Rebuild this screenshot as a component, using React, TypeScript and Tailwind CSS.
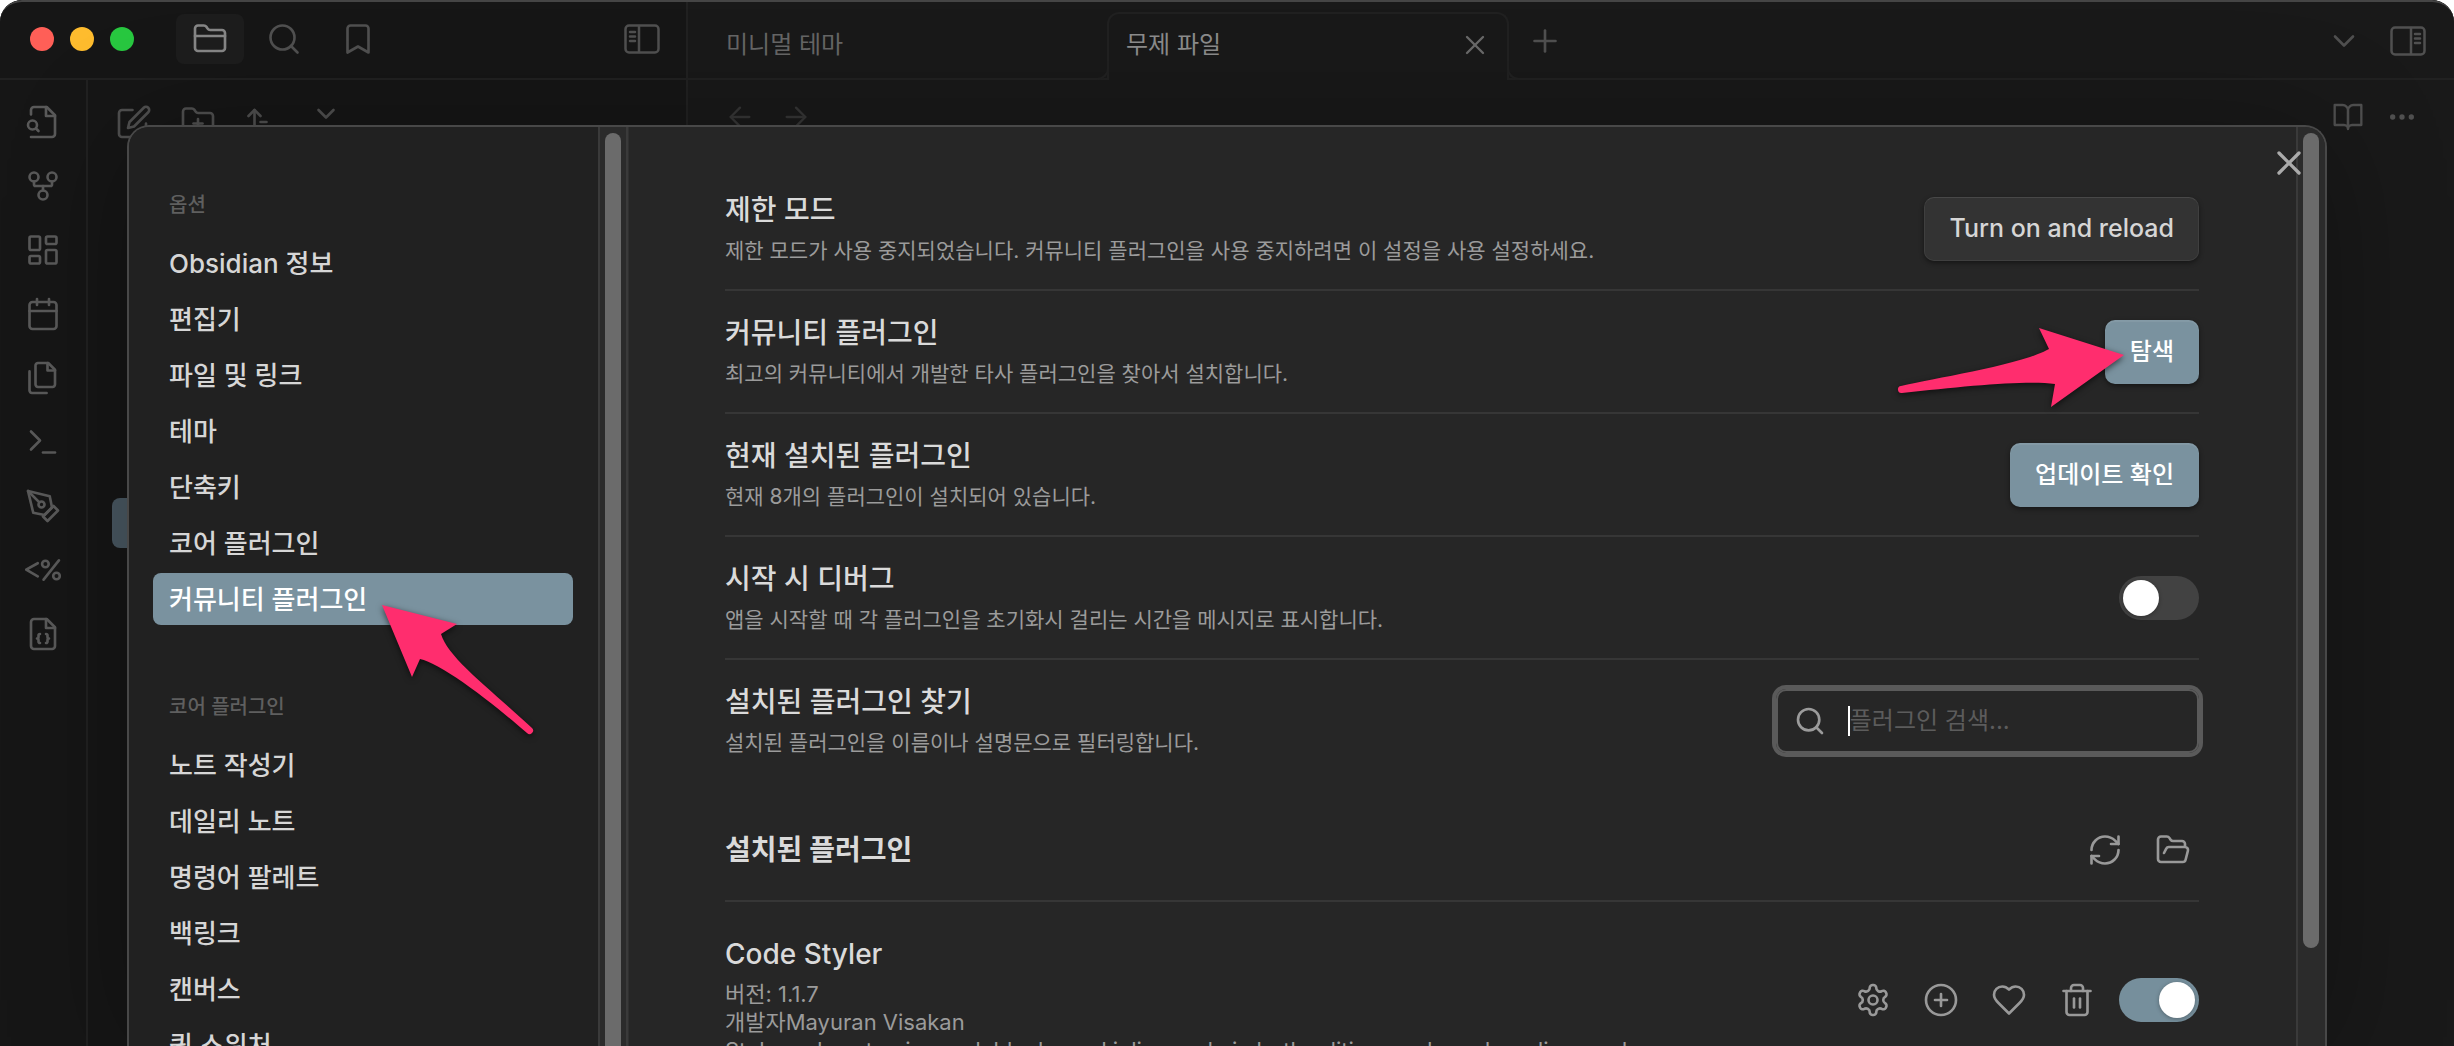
import { ReactNode, useState } from "react";
import {
  ArrowLeft,
  ArrowRight,
  ArrowUpNarrowWide,
  Bookmark,
  Calendar,
  ChevronDown,
  ChevronsDownUp,
  CirclePlus,
  Ellipsis,
  FolderClosed,
  FolderOpen,
  FolderPlus,
  LayoutDashboard,
  Plus,
  RefreshCw,
  Search,
  Terminal,
  Trash2,
  X,
} from "lucide-react";

const optionItems = ["Obsidian 정보", "편집기", "파일 및 링크", "테마", "단축키", "코어 플러그인", "커뮤니티 플러그인"];
const coreItems = ["노트 작성기", "데일리 노트", "명령어 팔레트", "백링크", "캔버스", "퀵 스위처"];

function Glyph({ children, size = 36 }: { children: ReactNode; size?: number }) {
  return (
    <svg
      width={size}
      height={size}
      viewBox="0 0 24 24"
      fill="none"
      stroke="currentColor"
      strokeWidth={1.75}
      strokeLinecap="round"
      strokeLinejoin="round"
      aria-hidden="true"
    >
      {children}
    </svg>
  );
}

const FileSearchIcon = () => (
  <Glyph>
    <path d="M4 22h14a2 2 0 0 0 2-2V7.5L14.5 2H6a2 2 0 0 0-2 2v3" />
    <path d="M14 2v6h6" />
    <circle cx="5" cy="14" r="3" />
    <path d="m9 18-1.5-1.5" />
  </Glyph>
);

const GraphIcon = () => (
  <Glyph>
    <circle cx="12" cy="18" r="3" />
    <circle cx="6" cy="6" r="3" />
    <circle cx="18" cy="6" r="3" />
    <path d="M18 9v2c0 .6-.4 1-1 1H7c-.6 0-1-.4-1-1V9" />
    <path d="M12 12v3" />
  </Glyph>
);

const FilesIcon = () => (
  <Glyph>
    <path d="M15.5 2H8.6c-.4 0-.8.2-1.1.5-.3.3-.5.7-.5 1.1v12.8c0 .4.2.8.5 1.1.3.3.7.5 1.1.5h9.8c.4 0 .8-.2 1.1-.5.3-.3.5-.7.5-1.1V6.5L15.5 2z" />
    <path d="M3 7.6v12.8c0 .4.2.8.5 1.1.3.3.7.5 1.1.5h9.8" />
    <path d="M15 2v5h5" />
  </Glyph>
);

const PenToolIcon = () => (
  <Glyph>
    <path d="m12 19 7-7 3 3-7 7-3-3z" />
    <path d="m18 13-1.5-7.5L2 2l3.5 14.5L13 18l5-5z" />
    <path d="m2 2 7.586 7.586" />
    <circle cx="11" cy="11" r="2" />
  </Glyph>
);

const TemplaterIcon = () => (
  <Glyph>
    <path d="M8.5 7.5 0.8 11.8l7.7 4.4M22.6 5.6 12.4 18.4" />
    <circle cx="13.6" cy="8" r="2.2" />
    <circle cx="21" cy="16" r="2.2" />
  </Glyph>
);

const FileJsonIcon = () => (
  <Glyph>
    <path d="M14.5 2H6a2 2 0 0 0-2 2v16a2 2 0 0 0 2 2h12a2 2 0 0 0 2-2V7.5L14.5 2z" />
    <path d="M14 2v6h6" />
    <path d="M10 12a1 1 0 0 0-1 1v1a1 1 0 0 1-1 1 1 1 0 0 1 1 1v1a1 1 0 0 0 1 1" />
    <path d="M14 18a1 1 0 0 0 1-1v-1a1 1 0 0 1 1-1 1 1 0 0 1-1-1v-1a1 1 0 0 0-1-1" />
  </Glyph>
);

const EditIcon = () => (
  <Glyph>
    <path d="M11 4H4a2 2 0 0 0-2 2v14a2 2 0 0 0 2 2h14a2 2 0 0 0 2-2v-7" />
    <path d="M18.5 2.5a2.12 2.12 0 0 1 3 3L12 15l-4 1 1-4Z" />
  </Glyph>
);

const BookIcon = () => (
  <Glyph size={32}>
    <path d="M2 3h6a4 4 0 0 1 4 4v14a3 3 0 0 0-3-3H2z" />
    <path d="M22 3h-6a4 4 0 0 0-4 4v14a3 3 0 0 1 3-3h7z" />
  </Glyph>
);

const GearIcon = () => (
  <Glyph>
    <path d="M12.22 2h-.44a2 2 0 0 0-2 2v.18a2 2 0 0 1-1 1.73l-.43.25a2 2 0 0 1-2 0l-.15-.08a2 2 0 0 0-2.73.73l-.22.38a2 2 0 0 0 .73 2.73l.15.1a2 2 0 0 1 1 1.72v.51a2 2 0 0 1-1 1.74l-.15.09a2 2 0 0 0-.73 2.73l.22.38a2 2 0 0 0 2.73.73l.15-.08a2 2 0 0 1 2 0l.43.25a2 2 0 0 1 1 1.73V20a2 2 0 0 0 2 2h.44a2 2 0 0 0 2-2v-.18a2 2 0 0 1 1-1.73l.43-.25a2 2 0 0 1 2 0l.15.08a2 2 0 0 0 2.73-.73l.22-.39a2 2 0 0 0-.73-2.73l-.15-.08a2 2 0 0 1-1-1.74v-.5a2 2 0 0 1 1-1.74l.15-.09a2 2 0 0 0 .73-2.73l-.22-.38a2 2 0 0 0-2.73-.73l-.15.08a2 2 0 0 1-2 0l-.43-.25a2 2 0 0 1-1-1.73V4a2 2 0 0 0-2-2z" />
    <circle cx="12" cy="12" r="3" />
  </Glyph>
);

const HeartIcon = () => (
  <Glyph>
    <path d="M19 14c1.49-1.46 3-3.21 3-5.5A5.5 5.5 0 0 0 16.5 3c-1.76 0-3 .5-4.5 2-1.5-1.5-2.74-2-4.5-2A5.5 5.5 0 0 0 2 8.5c0 2.3 1.5 4.05 3 5.5l7 7Z" />
  </Glyph>
);

function PanelIcon({ side }: { side: "left" | "right" }) {
  const split = side === "left" ? 15 : 21;
  const dash = side === "left" ? 6 : 25;
  return (
    <svg width="36" height="30" viewBox="0 0 36 30" fill="none" stroke="currentColor" strokeWidth="2.5" strokeLinecap="round" aria-hidden="true">
      <rect x="1.5" y="1.5" width="33" height="27" rx="3.5" />
      <path d={`M${split} 2v26M${dash} 8h5M${dash} 12.5h5M${dash} 17h5`} />
    </svg>
  );
}

function IconButton({ label, children, className = "" }: { label: string; children: ReactNode; className?: string }) {
  return (
    <button type="button" aria-label={label} className={`flex shrink-0 items-center justify-center ${className}`}>
      {children}
    </button>
  );
}

function Ribbon() {
  return (
    <nav className="flex w-[88px] shrink-0 flex-col items-center gap-7 border-r-2 border-[#212121] pt-6 text-[#5a5a5a]">
      <IconButton label="빠른 전환"><FileSearchIcon /></IconButton>
      <IconButton label="그래프 뷰"><GraphIcon /></IconButton>
      <IconButton label="캔버스"><LayoutDashboard size={36} strokeWidth={1.75} /></IconButton>
      <IconButton label="데일리 노트"><Calendar size={36} strokeWidth={1.75} /></IconButton>
      <IconButton label="템플릿"><FilesIcon /></IconButton>
      <IconButton label="명령어 팔레트"><Terminal size={36} strokeWidth={1.75} /></IconButton>
      <IconButton label="그리기"><PenToolIcon /></IconButton>
      <IconButton label="템플레이터"><TemplaterIcon /></IconButton>
      <IconButton label="스니펫"><FileJsonIcon /></IconButton>
    </nav>
  );
}

function Workspace() {
  return (
    <div className="flex h-full">
      <div className="flex w-[688px] shrink-0 flex-col border-r-2 border-[#212121] bg-[#161616]">
        <header className="flex h-20 shrink-0 items-center border-b-2 border-[#212121] pl-[30px] pr-[26px] text-[#505050]">
          <div className="flex gap-4">
            <span className="size-6 rounded-full bg-[#ff5f57]" />
            <span className="size-6 rounded-full bg-[#febc2e]" />
            <span className="size-6 rounded-full bg-[#28c840]" />
          </div>
          <div className="ml-[42px] flex gap-[6px]">
            <IconButton label="파일" className="h-[50px] w-[68px] rounded-lg bg-[#1d1d1d] text-[#878787]">
              <FolderClosed size={36} strokeWidth={1.75} />
            </IconButton>
            <IconButton label="검색" className="h-[50px] w-[68px]"><Search size={36} strokeWidth={1.75} /></IconButton>
            <IconButton label="북마크" className="h-[50px] w-[68px]"><Bookmark size={36} strokeWidth={1.75} /></IconButton>
          </div>
          <IconButton label="왼쪽 사이드바" className="ml-auto"><PanelIcon side="left" /></IconButton>
        </header>
        <div className="flex min-h-0 grow">
          <Ribbon />
          <div className="grow pl-6">
            <div className="flex gap-7 pl-1 pt-6 text-[#505050]">
              <IconButton label="새 노트"><EditIcon /></IconButton>
              <IconButton label="새 폴더"><FolderPlus size={36} strokeWidth={1.75} /></IconButton>
              <IconButton label="정렬"><ArrowUpNarrowWide size={36} strokeWidth={1.75} /></IconButton>
              <IconButton label="모두 접기"><ChevronsDownUp size={36} strokeWidth={1.75} /></IconButton>
            </div>
            <div className="mt-[358px] h-[50px] rounded-l-lg bg-[#4a5963]" />
          </div>
        </div>
      </div>

      <div className="flex min-w-0 grow flex-col bg-[#191919]">
        <header className="flex h-20 shrink-0 text-[24px] text-[#666666]">
          <div className="flex w-[419px] items-center border-b-2 border-[#212121] pl-[38px] pt-3">미니멀 테마</div>
          <div className="relative mt-3 flex w-[402px] items-center justify-between rounded-t-xl border-2 border-b-0 border-[#212121] pb-1 pl-[17px] pr-4 text-[#8c8c8c]">
            <span className="absolute -left-3 bottom-0 size-3 rounded-br-xl border-b-2 border-r-2 border-[#212121] bg-[#191919]" />
            <span className="absolute -right-3 bottom-0 size-3 rounded-bl-xl border-b-2 border-l-2 border-[#212121] bg-[#191919]" />
            무제 파일
            <IconButton label="탭 닫기" className="text-[#6a6a6a]"><X size={32} strokeWidth={1.75} /></IconButton>
          </div>
          <div className="flex grow items-center border-b-2 border-[#212121] pl-[18px] pr-[28px] pt-1 text-[#505050]">
            <IconButton label="새 탭"><Plus size={36} strokeWidth={1.75} /></IconButton>
            <IconButton label="탭 목록" className="ml-auto mr-7"><ChevronDown size={36} strokeWidth={1.75} /></IconButton>
            <IconButton label="오른쪽 사이드바"><PanelIcon side="right" /></IconButton>
          </div>
        </header>
        <div className="flex items-center pl-9 pr-9 pt-[21px] text-[#505050]">
          <div className="flex gap-6 text-[#363636]">
            <IconButton label="뒤로"><ArrowLeft size={32} strokeWidth={1.75} /></IconButton>
            <IconButton label="앞으로"><ArrowRight size={32} strokeWidth={1.75} /></IconButton>
          </div>
          <div className="ml-auto flex gap-[22px]">
            <IconButton label="읽기 모드"><BookIcon /></IconButton>
            <IconButton label="더 보기"><Ellipsis size={32} strokeWidth={2} /></IconButton>
          </div>
        </div>
      </div>
    </div>
  );
}

function NavSection({ title, items, active }: { title: string; items: string[]; active?: string }) {
  return (
    <section>
      <h2 className="flex h-14 items-center pl-4 text-[20px] font-medium text-[#5f5f5f]">{title}</h2>
      <ul className="mt-1 flex flex-col gap-1">
        {items.map((item) => (
          <li key={item} className="relative">
            <button
              type="button"
              className={`flex h-[52px] w-full items-center rounded-lg pl-4 text-left text-[26px] font-medium ${
                item === active ? "bg-[#7a929f] text-white" : "text-[#d6d6d6]"
              }`}
            >
              {item}
            </button>
            {item === active && (
              <svg
                className="absolute left-[224px] top-[26px] z-10 drop-shadow-[0_2px_3px_rgba(0,0,0,0.6)]"
                width="160"
                height="140"
                viewBox="377 600 160 140"
                aria-hidden="true"
              >
                <path
                  fill="#ff2d6e"
                  d="M382 606 457 625 441 635C448 658 483 684 532 729A3.5 3.5 0 0 1 527 734C488 700 440 664 420 660L412 678Z"
                />
              </svg>
            )}
          </li>
        ))}
      </ul>
    </section>
  );
}

function SettingRow({ name, desc, last, children }: { name: string; desc: string; last?: boolean; children: ReactNode }) {
  return (
    <div className={`flex items-center justify-between border-b-2 pb-[23px] pt-6 ${last ? "border-transparent" : "border-[#363636]"}`}>
      <div>
        <h3 className="text-[28px] font-medium leading-9 text-[#dadada]">{name}</h3>
        <p className="mt-2 text-[21px] leading-[30px] text-[#9b9b9b]">{desc}</p>
      </div>
      {children}
    </div>
  );
}

function Toggle({ label, on, onChange }: { label: string; on: boolean; onChange: (v: boolean) => void }) {
  return (
    <label className={`flex h-11 w-20 shrink-0 cursor-pointer items-center rounded-full p-1 ${on ? "justify-end bg-[#768f9c]" : "bg-[#424242]"}`}>
      <input type="checkbox" className="sr-only" aria-label={label} checked={on} onChange={(e) => onChange(e.target.checked)} />
      <span className="size-9 rounded-full bg-white shadow-[0_1px_4px_rgba(0,0,0,0.3)]" />
    </label>
  );
}

function Scrollbar({ className, thumb }: { className: string; thumb: string }) {
  return (
    <div className={`shrink-0 border-[#3a3a3a] bg-[#2b2b2b] px-[5px] pt-[6px] ${className}`}>
      <div className={`w-4 rounded-full bg-[#6b6b6b] ${thumb}`} />
    </div>
  );
}

const ctaButton =
  "h-16 rounded-[10px] bg-[#7a929f] px-[25px] text-[24px] font-medium text-white shadow-[inset_0_2px_1px_rgba(255,255,255,0.08),0_2px_5px_rgba(0,0,0,0.45)]";

export default function App() {
  const [debug, setDebug] = useState(false);
  const [codeStyler, setCodeStyler] = useState(true);
  const [query, setQuery] = useState("");

  return (
    <div className="relative h-screen overflow-hidden rounded-t-[22px] bg-[#161616] font-['Inter','Noto_Sans_CJK_KR',sans-serif]">
      <Workspace />
      <div className="pointer-events-none absolute inset-0 rounded-t-[22px] border-t-2 border-[#454545]" />

      <div className="absolute inset-0 px-[127px] pt-[125px]">
        <div
          role="dialog"
          aria-label="설정"
          className="relative flex h-full overflow-hidden rounded-t-[22px] border-2 border-b-0 border-[#484848] bg-[#262626] shadow-[0_10px_120px_rgba(0,0,0,0.3)]"
        >
          <aside className="flex w-[500px] shrink-0 border-r border-[#303030] bg-[#212121]">
            <div className="flex min-w-0 grow flex-col gap-[54px] pl-6 pr-[25px] pt-[50px]">
              <NavSection title="옵션" items={optionItems} active="커뮤니티 플러그인" />
              <NavSection title="코어 플러그인" items={coreItems} />
            </div>
            <Scrollbar className="w-[30px] border-x-2" thumb="h-[1200px]" />
          </aside>

          <main className="min-w-0 grow pl-24 pr-[97px] pt-[41px]">
            <SettingRow name="제한 모드" desc="제한 모드가 사용 중지되었습니다. 커뮤니티 플러그인을 사용 중지하려면 이 설정을 사용 설정하세요.">
              <button
                type="button"
                className="h-16 rounded-[10px] border border-[#3f3f3f] border-t-[#484848] bg-[#333333] px-6 text-[25px] font-medium text-[#d6d6d6] shadow-[0_2px_5px_rgba(0,0,0,0.45)]"
              >
                Turn on and reload
              </button>
            </SettingRow>
            <SettingRow name="커뮤니티 플러그인" desc="최고의 커뮤니티에서 개발한 타사 플러그인을 찾아서 설치합니다.">
              <div className="relative">
                <button type="button" className={ctaButton}>탐색</button>
                <svg
                  className="absolute right-[70px] top-0 drop-shadow-[0_2px_3px_rgba(0,0,0,0.6)]"
                  width="235"
                  height="95"
                  viewBox="1894 319 235 95"
                  aria-hidden="true"
                >
                  <path
                    fill="#ff2d6e"
                    d="M1901 385C1935 377 2021 364 2049 348L2039 327 2124 354 2051 406 2055 383C2028 379 1965 385 1902 392A3.5 3.5 0 0 1 1901 385Z"
                  />
                </svg>
              </div>
            </SettingRow>
            <SettingRow name="현재 설치된 플러그인" desc="현재 8개의 플러그인이 설치되어 있습니다.">
              <button type="button" className={ctaButton}>업데이트 확인</button>
            </SettingRow>
            <SettingRow name="시작 시 디버그" desc="앱을 시작할 때 각 플러그인을 초기화시 걸리는 시간을 메시지로 표시합니다.">
              <Toggle label="시작 시 디버그" on={debug} onChange={setDebug} />
            </SettingRow>
            <SettingRow last name="설치된 플러그인 찾기" desc="설치된 플러그인을 이름이나 설명문으로 필터링합니다.">
              <label className="flex h-16 w-[423px] items-center rounded-[10px] border-2 border-[#5a5a5a] px-4 text-[#9b9b9b] ring-4 ring-[#5a5a5a]">
                <Search size={36} strokeWidth={2} />
                <span className="ml-[22px] h-[30px] w-[2px] bg-white" />
                <input
                  type="text"
                  aria-label="플러그인 검색"
                  placeholder="플러그인 검색..."
                  value={query}
                  onChange={(e) => setQuery(e.target.value)}
                  className="min-w-0 grow bg-transparent text-[24px] text-[#dadada] caret-transparent outline-none placeholder:text-[#5c5c5c]"
                />
              </label>
            </SettingRow>

            <div className="flex h-[119px] items-center justify-between border-b-2 border-[#363636] pt-4">
              <h3 className="text-[28px] font-semibold leading-9 text-[#dadada]">설치된 플러그인</h3>
              <div className="flex gap-4 text-[#999999]">
                <IconButton label="새로고침" className="size-[52px]"><RefreshCw size={36} strokeWidth={1.75} /></IconButton>
                <IconButton label="폴더 열기" className="size-[52px]"><FolderOpen size={36} strokeWidth={1.75} /></IconButton>
              </div>
            </div>

            <div className="flex items-center justify-between pt-[34px]">
              <div>
                <h3 className="text-[28px] font-medium leading-9 text-[#dadada]">Code Styler</h3>
                <div className="mt-2 text-[22px] leading-7 text-[#9b9b9b]">
                  <p>버전: 1.1.7</p>
                  <p>개발자Mayuran Visakan</p>
                  <p>Style and customize codeblocks and inline code in both editing mode and reading mode.</p>
                </div>
              </div>
              <div className="flex items-center gap-4 text-[#999999]">
                <IconButton label="옵션" className="size-[52px]"><GearIcon /></IconButton>
                <IconButton label="단축키" className="size-[52px]"><CirclePlus size={36} strokeWidth={1.75} /></IconButton>
                <IconButton label="후원" className="size-[52px]"><HeartIcon /></IconButton>
                <IconButton label="제거" className="size-[52px]"><Trash2 size={36} strokeWidth={1.75} /></IconButton>
                <Toggle label="Code Styler" on={codeStyler} onChange={setCodeStyler} />
              </div>
            </div>
          </main>

          <Scrollbar className="w-[29px] border-l-2" thumb="h-[815px]" />
          <IconButton label="닫기" className="absolute right-4 top-4 text-[#ababab]">
            <X size={40} strokeWidth={2} />
          </IconButton>
        </div>
      </div>
    </div>
  );
}
